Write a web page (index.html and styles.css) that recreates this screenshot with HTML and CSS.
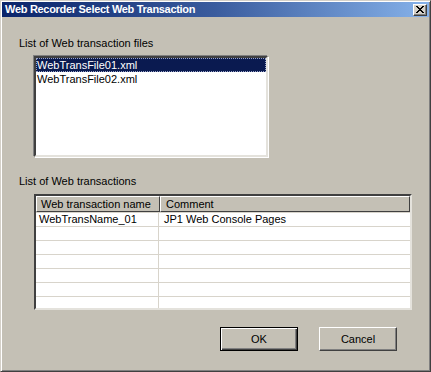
FILE: index.html
```html
<!DOCTYPE html>
<html>
<head>
<meta charset="utf-8">
<link rel="stylesheet" href="styles.css">
</head>
<body>
<div class="window">
  <div class="titlebar">
    <span class="title">Web Recorder Select Web Transaction</span>
    <span class="close">
      <svg width="8" height="7" viewBox="0 0 8 7"><path d="M0 0h2v1H0zM6 0h2v1H6zM1 1h2v1H1zM5 1h2v1H5zM2 2h4v1H2zM3 3h2v1H3zM2 4h4v1H2zM1 5h2v1H1zM5 5h2v1H5zM0 6h2v1H0zM6 6h2v1H6z" fill="#000"/></svg>
    </span>
  </div>
  <div class="content">
    <div class="label first">List of Web transaction files</div>
    <div class="listbox">
      <div class="item selected">WebTransFile01.xml</div>
      <div class="item">WebTransFile02.xml</div>
    </div>
    <div class="label second">List of Web transactions</div>
    <div class="table">
      <div class="row head">
        <div class="cell c1">Web transaction name</div>
        <div class="cell c2">Comment</div>
      </div>
      <div class="row"><div class="cell c1">WebTransName_01</div><div class="cell c2">JP1 Web Console Pages</div></div>
      <div class="row"><div class="cell c1"></div><div class="cell c2"></div></div>
      <div class="row"><div class="cell c1"></div><div class="cell c2"></div></div>
      <div class="row"><div class="cell c1"></div><div class="cell c2"></div></div>
      <div class="row"><div class="cell c1"></div><div class="cell c2"></div></div>
      <div class="row"><div class="cell c1"></div><div class="cell c2"></div></div>
      <div class="row"><div class="cell c1"></div><div class="cell c2"></div></div>
    </div>
    <div class="buttons">
      <button class="btn default">OK</button>
      <button class="btn">Cancel</button>
    </div>
  </div>
</div>
</body>
</html>
```
FILE: styles.css
```css
html, body {
  margin: 0;
  padding: 0;
  background: #c4c0b5;
}
body {
  font-family: "Liberation Sans", Arial, sans-serif;
  font-size: 11px;
  color: #000;
}
.window {
  width: 431px;
  height: 372px;
  box-sizing: border-box;
  background: #c4c0b5;
  border-top: 1px solid #d4d0c8;
  border-left: 1px solid #d4d0c8;
  border-right: 1px solid #404040;
  border-bottom: 1px solid #404040;
  box-shadow: inset 1px 1px #fff, inset -1px -1px #808080;
  padding: 1px;
  display: flex;
  flex-direction: column;
}
.titlebar {
  height: 15px;
  background: linear-gradient(to right, #0a246a, #3a5c9e 50%, #86b2ea);
  display: flex;
  align-items: center;
  justify-content: space-between;
}
.title {
  color: #fff;
  font-weight: bold;
  font-size: 11px;
  letter-spacing: -0.3px;
  padding-left: 3px;
  line-height: 15px;
  white-space: nowrap;
}
.close {
  width: 14px;
  height: 12px;
  box-sizing: border-box;
  margin-right: 2px;
  margin-top: 1px;
  background: #d4d0c8;
  border-top: 1px solid #fff;
  border-left: 1px solid #fff;
  border-right: 1px solid #404040;
  border-bottom: 1px solid #404040;
  box-shadow: inset -1px -1px #808080;
  display: flex;
  align-items: center;
  justify-content: center;
}
.close svg { display: block; margin-left: -1px; margin-top: -1px; }
.content {
  padding: 0 17px;
  display: flex;
  flex-direction: column;
}
.label {
  line-height: 13px;
  height: 13px;
  white-space: nowrap;
}
.label.first { margin-top: 20px; }
.label.second { margin-top: 18px; }
.listbox {
  margin-top: 6px;
  margin-left: 15px;
  width: 234px;
  height: 101px;
  box-sizing: border-box;
  background: #fff;
  border-top: 2px solid #404040;
  border-left: 2px solid #404040;
  border-right: 2px solid #e4e2dc;
  border-bottom: 2px solid #e4e2dc;
  box-shadow: -1px -1px #808080, 1px 1px #fff;
}
.item {
  height: 14px;
  line-height: 14px;
  padding-left: 1px;
  white-space: nowrap;
}
.item.selected {
  background: #0a1a50;
  color: #fff;
  outline: 1px dotted #9aa4c8;
  outline-offset: -1px;
}
.table {
  margin-top: 6px;
  margin-left: 15px;
  width: 378px;
  height: 116px;
  box-sizing: border-box;
  background: #fff;
  border-top: 2px solid #404040;
  border-left: 2px solid #404040;
  border-right: 2px solid #e4e2dc;
  border-bottom: 2px solid #e4e2dc;
  overflow: hidden;
  display: flex;
  flex-direction: column;
}
.row {
  display: flex;
  height: 14px;
  flex: none;
  box-sizing: border-box;
  border-bottom: 1px solid #d8d4cb;
}
.row .cell {
  line-height: 13px;
  padding-left: 3px;
  white-space: nowrap;
  box-sizing: border-box;
}
.row .c1 {
  width: 123px;
  border-right: 1px solid #d8d4cb;
}
.row .c2 { flex: 1; padding-left: 5px; }
.row.head {
  height: 17px;
  border-bottom: 1px solid #d8d4cb;
  background: #c4c0b5;
}
.row.head .cell {
  line-height: 14px;
  padding-left: 4px;
  border-top: 1px solid #fff;
  border-left: 1px solid #fff;
  border-right: 1px solid #404040;
  border-bottom: 1px solid #404040;
}
.row.head .c1 { width: 124px; }
.row.head .c2 { padding-left: 5px; }
.buttons {
  margin-top: 17px;
  display: flex;
  justify-content: flex-end;
  gap: 21px;
  padding-right: 15px;
}
.btn {
  width: 78px;
  height: 24px;
  box-sizing: border-box;
  margin: 0;
  padding: 0;
  font-family: "Liberation Sans", Arial, sans-serif;
  font-size: 11px;
  color: #000;
  background: #c4c0b5;
  border-top: 1px solid #fff;
  border-left: 1px solid #fff;
  border-right: 1px solid #404040;
  border-bottom: 1px solid #404040;
  box-shadow: inset -1px -1px #808080;
}
.btn.default {
  border: 1px solid #000;
  box-shadow: inset 1px 1px #fff, inset -1px -1px #404040, inset -2px -2px #808080;
}
```
